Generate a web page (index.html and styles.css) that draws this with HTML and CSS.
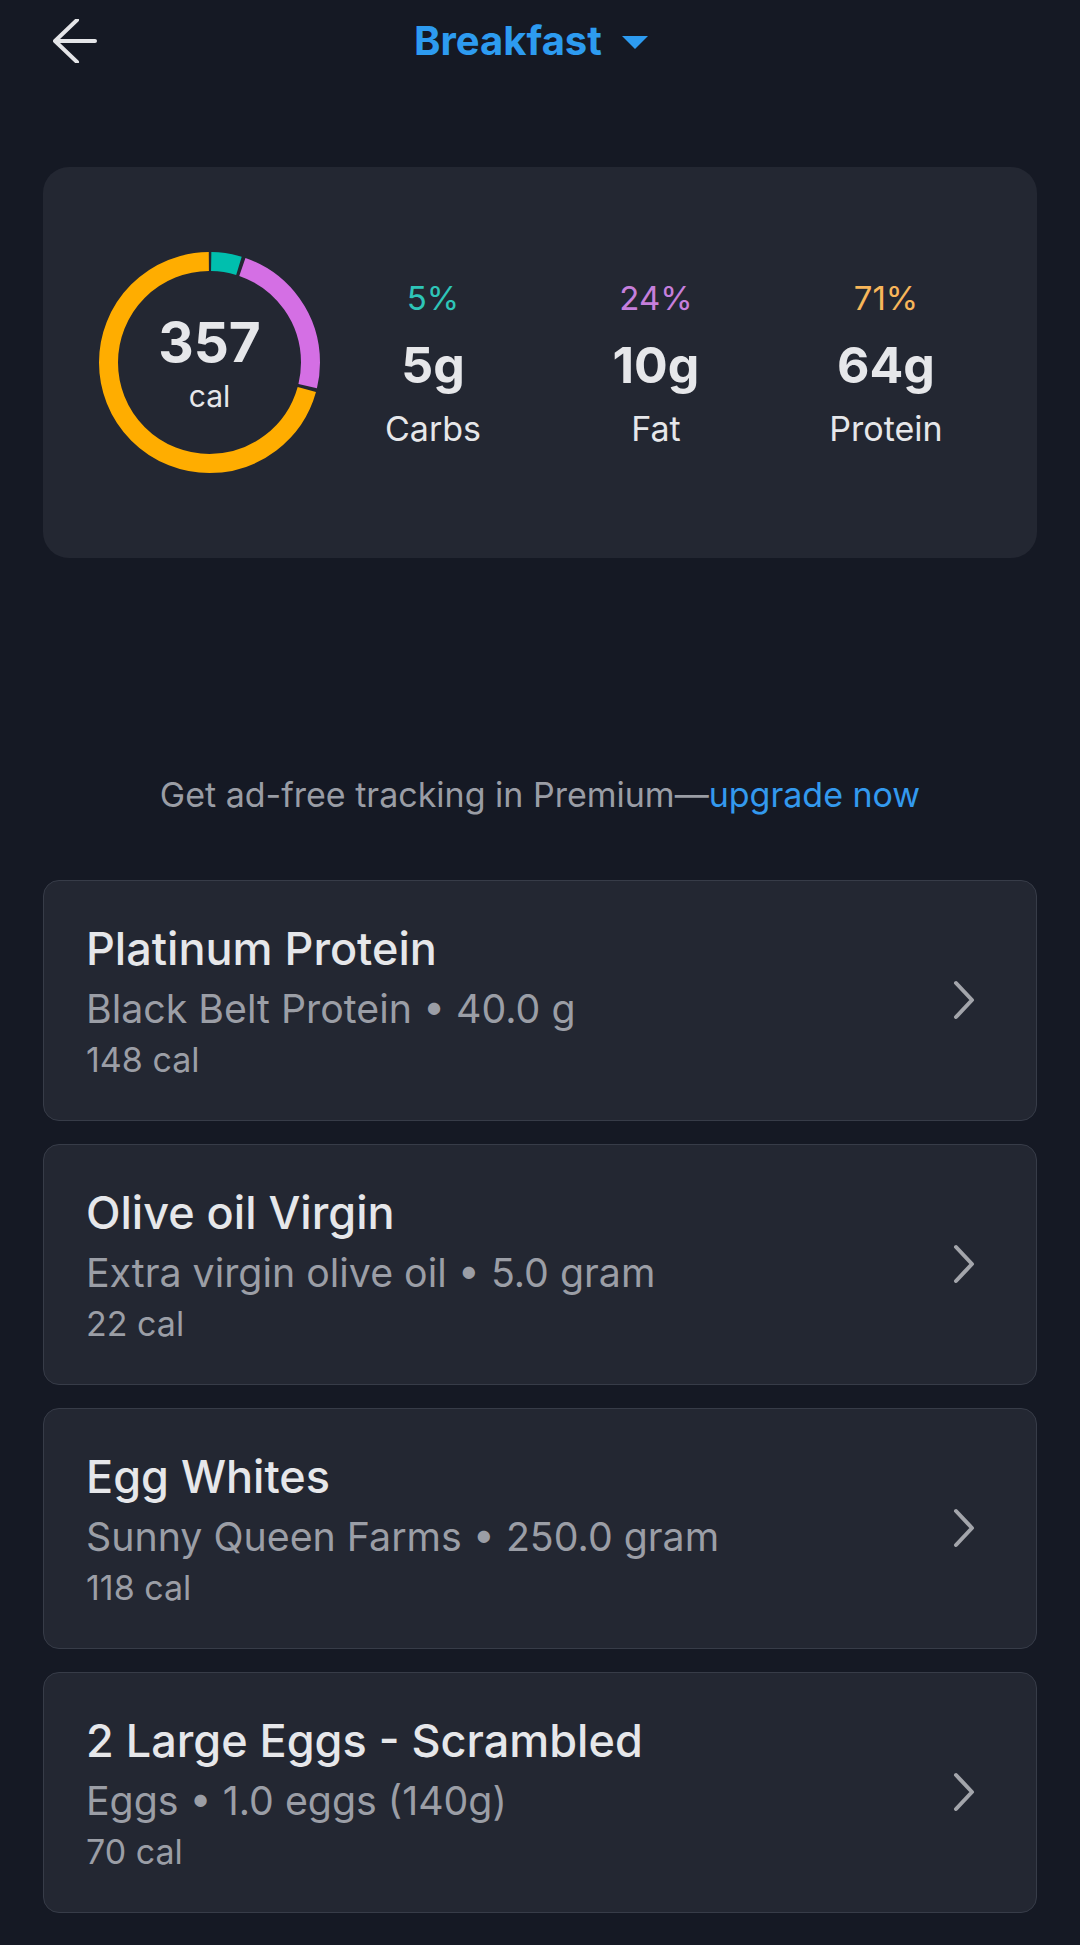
FILE: index.html
```html
<!DOCTYPE html>
<html lang="en">
<head>
  <meta charset="UTF-8" />
  <meta name="viewport" content="width=device-width, initial-scale=1.0"/>
  <title>Breakfast</title>
  <link rel="stylesheet" href="styles.css">
</head>
<body>

  <header class="top-bar">
    <button class="back-btn" aria-label="Back">
      <svg width="44" height="44" viewBox="0 0 44 44">
        <path d="M24 21 L2 42 L24 63" transform="translate(0,-20)" fill="none" stroke="#e4e5e8" stroke-width="4" stroke-linecap="round" stroke-linejoin="round"/>
        <path d="M3 22 H42" fill="none" stroke="#e4e5e8" stroke-width="4" stroke-linecap="round"/>
      </svg>
    </button>
    <div class="meal-title">
      Breakfast
      <svg class="caret" width="26" height="13" viewBox="0 0 26 13"><path d="M0 0 H26 L13 13 Z" fill="#2d9bf0"/></svg>
    </div>
  </header>

  <section class="summary">
    <div class="donut">
      <svg width="221" height="221" viewBox="0 0 221 221">
        <g transform="rotate(-90 110.5 110.5)" fill="none" stroke-width="19">
          <circle cx="110.5" cy="110.5" r="101" stroke="#00bfae" stroke-dasharray="28.2 700" stroke-dashoffset="-1.75"/>
          <circle cx="110.5" cy="110.5" r="101" stroke="#d46fe4" stroke-dasharray="148.8 700" stroke-dashoffset="-33.5"/>
          <circle cx="110.5" cy="110.5" r="101" stroke="#ffad00" stroke-dasharray="447.1 700" stroke-dashoffset="-185.8"/>
        </g>
      </svg>
      <div class="donut-label">
        <div class="cal-value">357</div>
        <div class="cal-unit">cal</div>
      </div>
    </div>

    <div class="macros">
      <div class="macro">
        <div class="pct carbs">5%</div>
        <div class="grams">5g</div>
        <div class="macro-name">Carbs</div>
      </div>
      <div class="macro">
        <div class="pct fat">24%</div>
        <div class="grams">10g</div>
        <div class="macro-name">Fat</div>
      </div>
      <div class="macro">
        <div class="pct protein">71%</div>
        <div class="grams">64g</div>
        <div class="macro-name">Protein</div>
      </div>
    </div>
  </section>

  <p class="promo">Get ad-free tracking in Premium—<a href="#">upgrade now</a></p>

  <ul class="food-list">
    <li class="food">
      <div class="food-info">
        <div class="food-name">Platinum Protein</div>
        <div class="food-desc">Black Belt Protein • 40.0 g</div>
        <div class="food-cal">148 cal</div>
      </div>
      <svg class="chevron" width="24" height="40" viewBox="0 0 24 40"><path d="M4 3 L20 20 L4 37" fill="none" stroke="#a3a5ab" stroke-width="4" stroke-linecap="round" stroke-linejoin="round"/></svg>
    </li>
    <li class="food">
      <div class="food-info">
        <div class="food-name">Olive oil Virgin</div>
        <div class="food-desc">Extra virgin olive oil • 5.0 gram</div>
        <div class="food-cal">22 cal</div>
      </div>
      <svg class="chevron" width="24" height="40" viewBox="0 0 24 40"><path d="M4 3 L20 20 L4 37" fill="none" stroke="#a3a5ab" stroke-width="4" stroke-linecap="round" stroke-linejoin="round"/></svg>
    </li>
    <li class="food">
      <div class="food-info">
        <div class="food-name">Egg Whites</div>
        <div class="food-desc">Sunny Queen Farms • 250.0 gram</div>
        <div class="food-cal">118 cal</div>
      </div>
      <svg class="chevron" width="24" height="40" viewBox="0 0 24 40"><path d="M4 3 L20 20 L4 37" fill="none" stroke="#a3a5ab" stroke-width="4" stroke-linecap="round" stroke-linejoin="round"/></svg>
    </li>
    <li class="food">
      <div class="food-info">
        <div class="food-name">2 Large Eggs - Scrambled</div>
        <div class="food-desc">Eggs • 1.0 eggs (140g)</div>
        <div class="food-cal">70 cal</div>
      </div>
      <svg class="chevron" width="24" height="40" viewBox="0 0 24 40"><path d="M4 3 L20 20 L4 37" fill="none" stroke="#a3a5ab" stroke-width="4" stroke-linecap="round" stroke-linejoin="round"/></svg>
    </li>
  </ul>

</body>
</html>
```

FILE: styles.css
```css
body {
  margin: 0;
  padding: 0 43px;
  background: #151924;
  color: #e6e7ea;
  font-family: Inter, "Noto Sans", sans-serif;
}

.top-bar {
  height: 82px;
  display: flex;
  align-items: center;
  justify-content: center;
  position: relative;
}
.back-btn {
  position: absolute;
  left: 10px;
  top: 19px;
  background: none;
  border: 0;
  padding: 0;
  width: 44px;
  height: 44px;
}
.back-btn svg {
  display: block;
}
.meal-title {
  color: #2d9bf0;
  font-size: 40px;
  font-weight: 700;
  line-height: 82px;
  display: flex;
  align-items: center;
  gap: 20px;
  margin-right: 18px;
}
.caret {
  margin-top: 2px;
}

.summary {
  margin-top: 85px;
  height: 391px;
  background: #232732;
  border-radius: 26px;
  display: flex;
  align-items: center;
  padding-left: 56px;
  box-sizing: border-box;
}
.donut {
  position: relative;
  width: 221px;
  height: 221px;
}
.donut svg {
  display: block;
}
.donut-label {
  position: absolute;
  inset: 0;
  display: flex;
  flex-direction: column;
  align-items: center;
  justify-content: center;
}
.cal-value {
  font-size: 55px;
  font-weight: 700;
  line-height: 62px;
}
.cal-unit {
  font-size: 30px;
  line-height: 36px;
  margin-top: 5px;
}

.macros {
  display: grid;
  grid-template-columns: 224px 222px 238px;
  margin-left: 1px;
  padding-top: 4px;
}
.macro {
  text-align: center;
}
.pct {
  font-size: 33px;
  line-height: 40px;
}
.carbs { color: #2ec5b8; }
.fat { color: #c67fdc; }
.protein { color: #f8b65a; }
.grams {
  font-size: 50px;
  font-weight: 700;
  line-height: 60px;
  margin-top: 17px;
}
.macro-name {
  font-size: 34px;
  line-height: 44px;
  margin-top: 12px;
}

.promo {
  margin: 217px 0 0;
  text-align: center;
  font-size: 34px;
  line-height: 40px;
  color: #9a9da5;
}
.promo a {
  color: #3399ee;
  text-decoration: none;
}

.food-list {
  list-style: none;
  margin: 65px 0 0;
  padding: 0;
  display: flex;
  flex-direction: column;
  gap: 23px;
}
.food {
  background: #232732;
  border: 1px solid #373c48;
  border-radius: 16px;
  padding: 40px 60px 41px 42px;
  display: flex;
  align-items: center;
  justify-content: space-between;
}
.food-name {
  font-size: 45px;
  font-weight: 500;
  line-height: 56px;
}
.food-desc {
  font-size: 39.3px;
  line-height: 64px;
  color: #9b9ea6;
}
.food-cal {
  font-size: 34px;
  line-height: 38px;
  color: #9b9ea6;
}
.chevron {
  display: block;
}
```
